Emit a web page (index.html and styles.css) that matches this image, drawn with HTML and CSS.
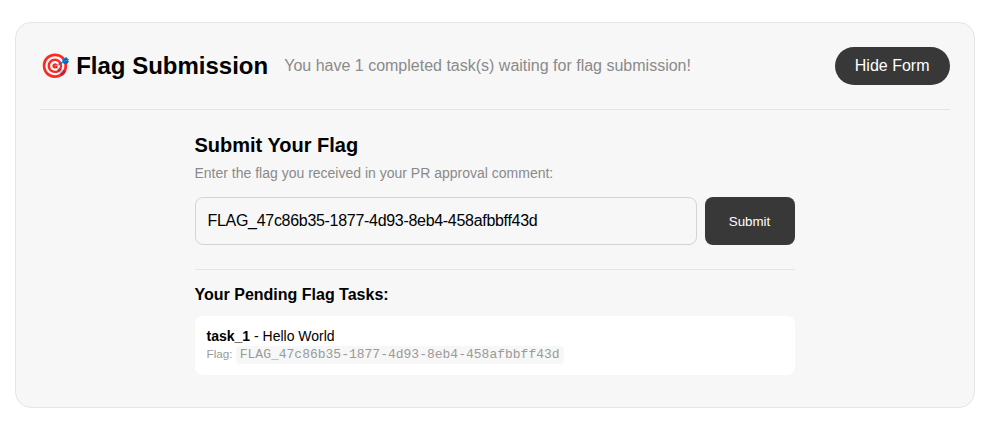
FILE: index.html
```html
<!DOCTYPE html>
<html lang="en">
<head>
<meta charset="utf-8">
<title>Flag Submission</title>
<link rel="stylesheet" href="styles.css">
</head>
<body>
<section class="card">
  <header class="head">
    <div class="head-left">
      <h2 class="title">🎯 Flag Submission</h2>
      <span class="subtitle">You have 1 completed task(s) waiting for flag submission!</span>
    </div>
    <button class="hide-btn" type="button">Hide Form</button>
  </header>
  <div class="form-wrap">
    <h3 class="form-title">Submit Your Flag</h3>
    <p class="form-desc">Enter the flag you received in your PR approval comment:</p>
    <form class="form-row">
      <input class="flag-input" type="text" value="FLAG_47c86b35-1877-4d93-8eb4-458afbbff43d">
      <button class="submit-btn" type="button">Submit</button>
    </form>
    <div class="pending">
      <h4 class="pending-title">Your Pending Flag Tasks:</h4>
      <div class="task">
        <div class="task-name"><strong>task_1</strong> - Hello World</div>
        <div class="task-flag">Flag: <code class="code">FLAG_47c86b35-1877-4d93-8eb4-458afbbff43d</code></div>
      </div>
    </div>
  </div>
</section>
</body>
</html>
```
FILE: styles.css
```css
* { box-sizing: border-box; }
html, body { margin: 0; background: #fff; }
body {
  padding: 22px 9.5px 15px 14.5px;
  font-family: "Liberation Sans", Arial, sans-serif;
  color: #000;
}
.card {
  background: #f7f7f7;
  border: 1px solid #e5e5e5;
  border-radius: 16px;
  padding: 24px;
  height: 386px;
}
.head {
  display: flex;
  align-items: center;
  justify-content: space-between;
  height: 63px;
  padding-bottom: 25px;
  border-bottom: 1px solid #e5e5e5;
}
.head-left { display: flex; align-items: center; gap: 16px; }
.title { margin: 0; font-size: 24px; line-height: 36px; font-weight: 700; }
.subtitle { font-size: 16px; color: #8a8a8a; }
.hide-btn {
  height: 38px;
  padding: 0 20px;
  border: 0;
  border-radius: 19px;
  background: #383838;
  color: #fff;
  font: 16px "Liberation Sans", Arial, sans-serif;
}
.form-wrap { width: 600px; margin: 0 auto; padding-top: 23px; }
.form-title { margin: 0; font-size: 20px; line-height: 24px; font-weight: 700; }
.form-desc { margin: 6px 0 0; font-size: 14px; line-height: 20px; color: #8a8a8a; }
.form-row { display: flex; gap: 8px; margin-top: 14px; }
.flag-input {
  flex: 1;
  height: 48px;
  padding: 0 12px;
  border: 1px solid #d4d4d4;
  border-radius: 8px;
  background: #f7f7f7;
  color: #000;
  font: 16px "Liberation Sans", Arial, sans-serif;
  letter-spacing: -0.3px;
}
.submit-btn {
  width: 90px;
  height: 48px;
  border: 0;
  border-radius: 8px;
  background: #383838;
  color: #fff;
  font: 13.33px "Liberation Sans", Arial, sans-serif;
}
.pending { margin-top: 24px; padding-top: 16px; border-top: 1px solid #e5e5e5; }
.pending-title { margin: 0; font-size: 16px; line-height: 18px; font-weight: 700; }
.task {
  margin-top: 12px;
  height: 59px;
  padding: 12px;
  border-radius: 8px;
  background: #fff;
}
.task-name { font-size: 14px; line-height: 16px; }
.task-flag { font-size: 11.7px; line-height: 18px; margin-top: 1px; color: #9a9a9a; }
.code {
  display: inline-block;
  padding: 0 4px;
  border-radius: 4px;
  background: #f7f7f7;
  font: 13px/18px "Liberation Mono", monospace;
}
```
